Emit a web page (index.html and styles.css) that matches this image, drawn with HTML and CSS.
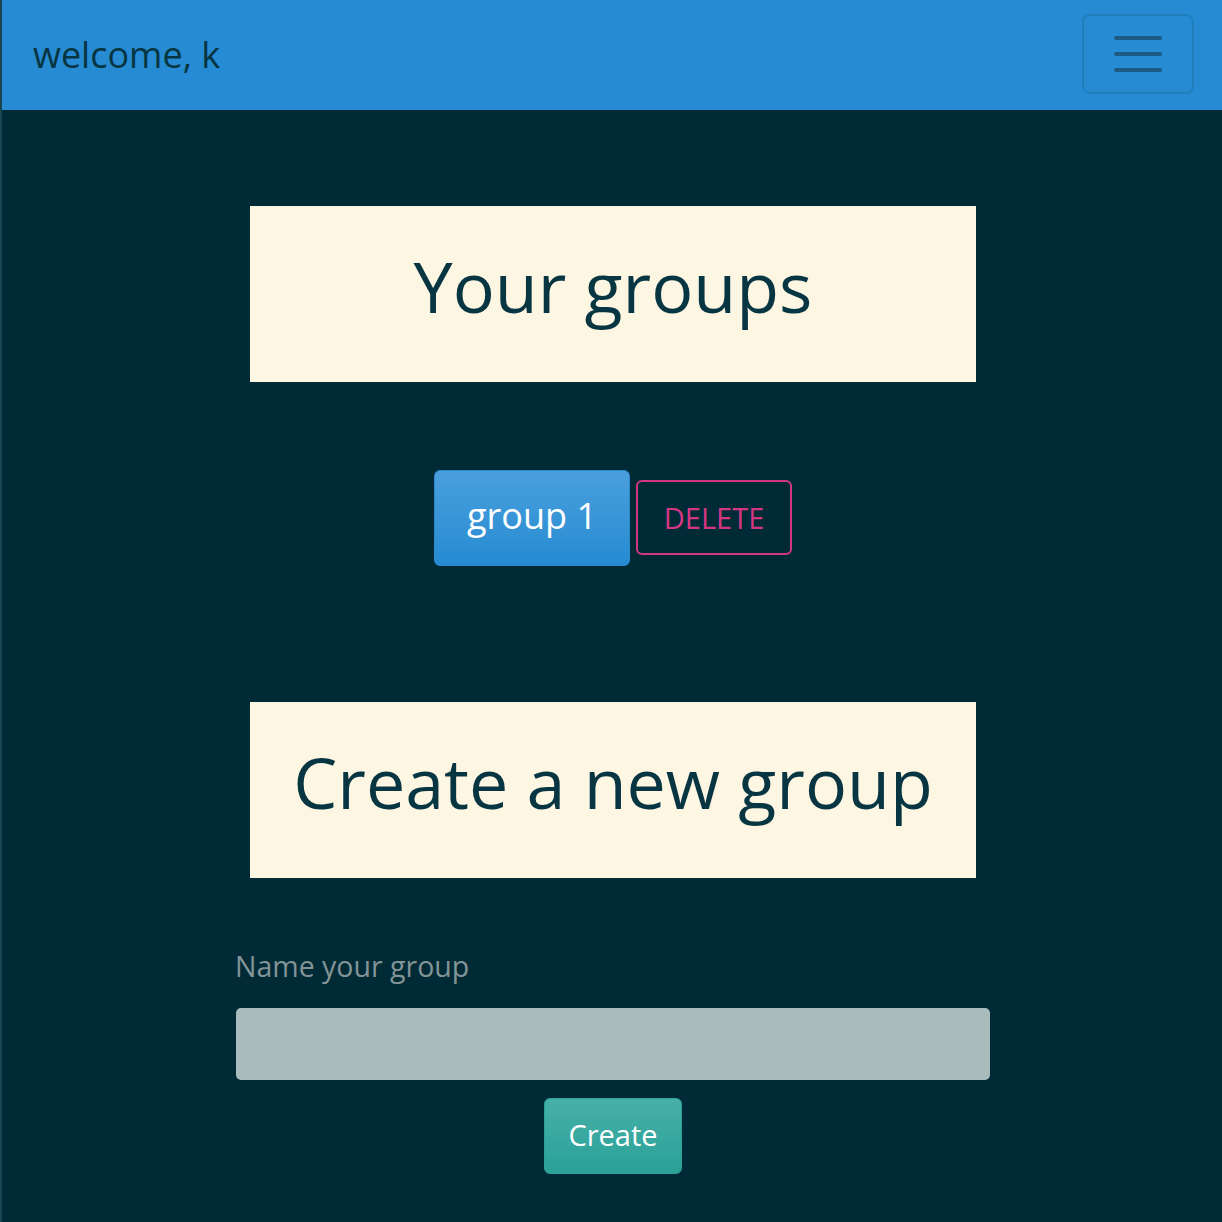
FILE: index.html
```html
<!DOCTYPE html>
<html>
<head>
<meta charset="utf-8">
<link rel="stylesheet" href="styles.css">
</head>
<body>
<nav class="navbar">
  <span class="brand">welcome, k</span>
  <button class="toggler" aria-label="menu">
    <span class="bar"></span><span class="bar"></span><span class="bar"></span>
  </button>
</nav>
<main class="page">
  <section class="panel"><h1 class="panel-title">Your groups</h1></section>
  <div class="group-row">
    <button class="btn-group">group 1</button>
    <button class="btn-delete">DELETE</button>
  </div>
  <section class="panel panel-create"><h1 class="panel-title">Create a new group</h1></section>
  <form class="create-form">
    <label class="field-label" for="gname">Name your group</label>
    <input class="field-input" id="gname" type="text">
    <div class="form-actions"><button class="btn-create" type="button">Create</button></div>
  </form>
</main>
</body>
</html>
```
FILE: styles.css
```css
html, body {
  margin: 0;
  padding: 0;
}
body {
  background: #002b36;
  font-family: "Open Sans", "Noto Sans", sans-serif;
  min-height: 1222px;
  border-left: 2px solid #1b4552;
  box-sizing: border-box;
}
.navbar {
  height: 110px;
  background: #268bd2;
  display: flex;
  align-items: center;
  justify-content: space-between;
  padding: 0 28px 0 31px;
  box-sizing: border-box;
  margin-left: -2px;
  border-left: 2px solid #4fa3de;
}
.brand {
  color: #073642;
  font-size: 36px;
  line-height: 1;
}
.toggler {
  width: 112px;
  height: 80px;
  margin-top: -2px;
  border: 2px solid rgba(7, 54, 66, 0.15);
  border-radius: 8px;
  background: transparent;
  display: flex;
  flex-direction: column;
  align-items: center;
  justify-content: center;
  gap: 12px;
  padding: 0;
}
.bar {
  display: block;
  width: 48px;
  height: 4px;
  border-radius: 2px;
  background: #1c5a85;
}
.page {
  width: 726px;
  margin: 0 auto;
  padding-top: 96px;
  transform: translateX(1px);
}
.panel {
  height: 176px;
  box-sizing: border-box;
  padding-bottom: 16px;
  background: #fdf6e3;
  display: flex;
  align-items: center;
  justify-content: center;
}
.panel-title {
  margin: 0;
  color: #073642;
  font-weight: 400;
  font-size: 70px;
  line-height: 1;
}
.group-row {
  display: flex;
  justify-content: center;
  align-items: center;
  gap: 6px;
  margin-top: 88px;
  height: 96px;
}
.btn-group {
  width: 196px;
  height: 96px;
  border: 1px solid #2a88c9;
  border-radius: 6px;
  background: linear-gradient(#4aa0dc, #268bd2);
  color: #fff;
  font-family: inherit;
  font-size: 36px;
  padding: 0 0 6px;
}
.btn-delete {
  width: 156px;
  height: 75px;
  border: 2px solid #d33682;
  border-radius: 6px;
  background: transparent;
  color: #d33682;
  font-family: inherit;
  font-size: 29px;
  padding: 0;
  margin-top: -2px;
}
.panel-create {
  margin-top: 136px;
}
.create-form {
  width: 754px;
  margin: 68px 0 0 -14px;
}
.field-label {
  display: block;
  color: #839496;
  font-size: 28.5px;
  line-height: 40px;
  margin-left: -1px;
}
.field-input {
  display: block;
  box-sizing: border-box;
  width: 754px;
  height: 72px;
  margin-top: 22px;
  border: none;
  border-radius: 5px;
  background: #a9bcbb;
}
.form-actions {
  display: flex;
  justify-content: center;
  margin-top: 18px;
}
.btn-create {
  width: 138px;
  height: 76px;
  border: 1px solid #2aa198;
  border-radius: 6px;
  background: linear-gradient(#47b0a8, #2aa198);
  color: #fff;
  font-family: inherit;
  font-size: 29px;
  padding: 0 0 4px;
}
```
